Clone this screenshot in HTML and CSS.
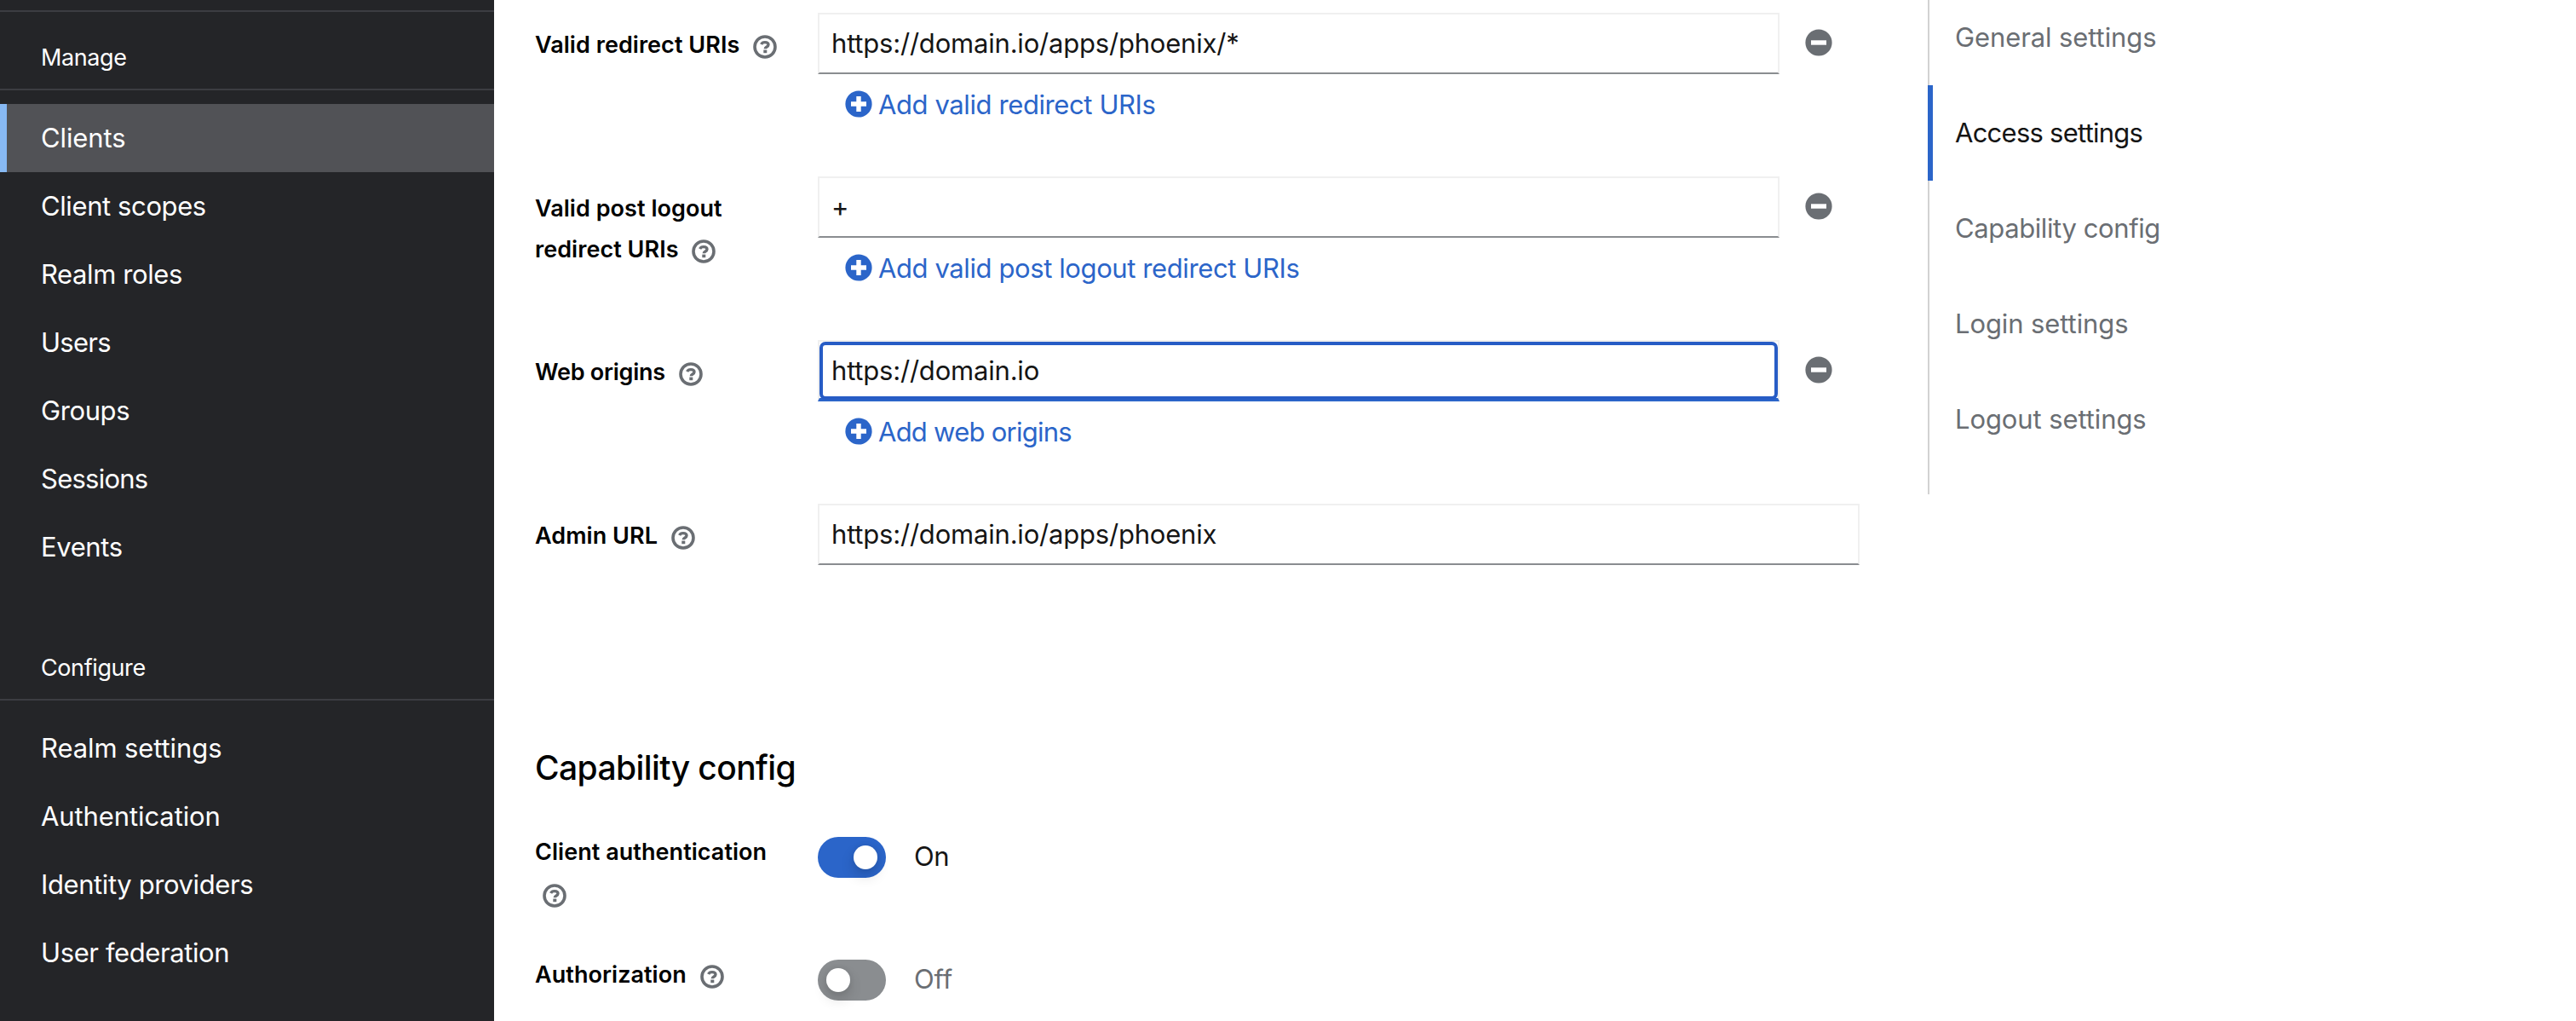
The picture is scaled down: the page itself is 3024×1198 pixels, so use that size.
FILE: index.html
```html
<!DOCTYPE html>
<html lang="en">
<head>
<meta charset="utf-8">
<title>Client details</title>
<link rel="stylesheet" href="styles.css">
</head>
<body>
<svg class="sprite" aria-hidden="true">
  <symbol id="help" viewBox="0 0 28 28">
    <circle cx="14" cy="14" r="12" fill="none" stroke="currentColor" stroke-width="3.600"/>
    <path d="M9.600 11C10.400 9.300 11.800 8.600 13.900 8.600c2.500 0 4.100 1.100 4.100 2.900 0 2.600-3.700 2.400-3.700 4.700" fill="none" stroke="currentColor" stroke-width="3.400"/>
    <rect x="12.300" y="17.600" width="4" height="3.600" fill="currentColor"/>
  </symbol>
  <symbol id="plus" viewBox="0 0 32 32">
    <circle cx="16" cy="16" r="15.600" fill="currentColor"/>
    <path d="M16 7v18M7 16h18" stroke="#fff" stroke-width="5.400"/>
  </symbol>
  <symbol id="minus" viewBox="0 0 32 32">
    <circle cx="16" cy="16" r="15.600" fill="currentColor"/>
    <path d="M7 16h18" stroke="#fff" stroke-width="5.400"/>
  </symbol>
</svg>
<div class="page">
  <nav class="sidebar">
    <section class="nav-section">
      <h2 class="nav-title"><span>Manage</span></h2>
      <ul class="nav-list">
        <li class="nav-item current loose">Clients</li>
        <li class="nav-item">Client scopes</li>
        <li class="nav-item">Realm roles</li>
        <li class="nav-item tight">Users</li>
        <li class="nav-item">Groups</li>
        <li class="nav-item tight">Sessions</li>
        <li class="nav-item">Events</li>
      </ul>
    </section>
    <section class="nav-section configure">
      <h2 class="nav-title"><span>Configure</span></h2>
      <ul class="nav-list">
        <li class="nav-item loose">Realm settings</li>
        <li class="nav-item loose">Authentication</li>
        <li class="nav-item">Identity providers</li>
        <li class="nav-item">User federation</li>
      </ul>
    </section>
  </nav>
  <main class="form">
    <div class="group">
      <div class="label">Valid redirect URIs <svg class="help"><use href="#help"/></svg></div>
      <div class="control">
        <div class="entry"><div class="input">https://domain.io/apps/phoenix/*</div><svg class="remove"><use href="#minus"/></svg></div>
        <div class="add">
          <svg class="plus"><use href="#plus"/></svg><span>Add valid redirect URIs</span>
        </div>
      </div>
    </div>
    <div class="group">
      <div class="label">Valid post logout<br>redirect URIs <svg class="help"><use href="#help"/></svg></div>
      <div class="control">
        <div class="entry"><div class="input">+</div><svg class="remove"><use href="#minus"/></svg></div>
        <div class="add">
          <svg class="plus"><use href="#plus"/></svg><span>Add valid post logout redirect URIs</span>
        </div>
      </div>
    </div>
    <div class="group">
      <div class="label"><span class="narrow">Web origins</span> <svg class="help"><use href="#help"/></svg></div>
      <div class="control">
        <div class="entry"><div class="input focused">https://domain.io</div><svg class="remove"><use href="#minus"/></svg></div>
        <div class="add">
          <svg class="plus"><use href="#plus"/></svg><span class="tight">Add web origins</span>
        </div>
      </div>
    </div>
    <div class="group">
      <div class="label">Admin URL <svg class="help"><use href="#help"/></svg></div>
      <div class="control">
        <div class="entry"><div class="input">https://domain.io/apps/phoenix</div></div>
      </div>
    </div>
    <h1 class="heading">Capability config</h1>
    <div class="group switch-row">
      <div class="label">Client authentication<br><svg class="help wrapped"><use href="#help"/></svg></div>
      <div class="switch on"><span class="track"><span class="knob"></span></span><span class="state">On</span></div>
    </div>
    <div class="group switch-row last">
      <div class="label">Authorization <svg class="help"><use href="#help"/></svg></div>
      <div class="switch"><span class="track"><span class="knob"></span></span><span class="state loose">Off</span></div>
    </div>
  </main>
  <ul class="jump-links">
    <li class="jump loose">General settings</li>
    <li class="jump active tight">Access settings</li>
    <li class="jump">Capability config</li>
    <li class="jump loose">Login settings</li>
    <li class="jump loose">Logout settings</li>
  </ul>
</div>
</body>
</html>
```
FILE: styles.css
```css
* { box-sizing: border-box; }
body {
  margin: 0;
  height: 1198px;
  overflow: hidden;
  background: #fff;
  color: #151515;
  font-family: Inter, "Liberation Sans", sans-serif;
  font-size: 31px;
  letter-spacing: -0.4px;
}
ul { list-style: none; margin: 0; padding: 0; }
h1, h2 { margin: 0; }
.sprite { display: none; }
.tight { letter-spacing: -0.75px; }
.loose { letter-spacing: -0.1px; }
.page { display: flex; align-items: flex-start; height: 1198px; }

.sidebar {
  flex: none;
  width: 580px;
  height: 1198px;
  padding-top: 12px;
  background: #242528;
  color: #fff;
}
.nav-section { border-top: 2px solid #3c3d42; }
.nav-section.configure { border-top: 0; }
.nav-title {
  padding: 33px 48px 15px;
  border-bottom: 2px solid #3c3d42;
  font-size: 27px;
  font-weight: 400;
  line-height: 42px;
}
.configure .nav-title { padding-top: 81px; }
.nav-list { padding-top: 16px; }
.nav-item { height: 80px; padding-left: 48px; line-height: 80px; }
.nav-item.current { border-left: 8px solid #87b9f3; padding-left: 40px; background: #515256; }

.form { flex: none; width: 1603px; padding: 15px 0 0 48px; }
.group { display: grid; grid-template-columns: 332px 1fr; height: 192px; }
.label {
  padding-top: 14px;
  color: #000;
  font-size: 27px;
  font-weight: 600;
  letter-spacing: 0.05px;
  line-height: 48px;
  white-space: nowrap;
}
.narrow { letter-spacing: -0.25px; }
.help { width: 28px; height: 28px; margin-left: 9px; vertical-align: -7px; color: #6a6e73; }
.entry { display: flex; align-items: center; gap: 30px; }
.input {
  position: relative;
  flex: 1;
  height: 72px;
  padding-left: 14px;
  border: 2px solid #f0f0f0;
  border-bottom-color: #8a8d90;
  letter-spacing: -0.2px;
  line-height: 68px;
}
.input.focused { border-bottom: 4px solid #2b65c9; }
.input.focused::after {
  content: "";
  position: absolute;
  inset: 0 0 -2px;
  border: 4px solid #275cc5;
  border-radius: 7px;
}
.remove { flex: none; width: 32px; height: 32px; margin: 0 32px 2px 0; color: #6a6e73; }
.add { display: flex; gap: 7px; padding: 12px 0 0 32px; line-height: 48px; color: #2b65c9; }
.plus { width: 32px; height: 32px; margin-top: 7px; }

.heading {
  height: 56px;
  margin-top: 90px;
  color: #000;
  font-size: 39px;
  font-weight: 500;
  letter-spacing: -0.6px;
  line-height: 56px;
}
.switch-row { height: 144px; }
.heading + .switch-row { margin-top: 53px; }
.switch-row.last { height: 72px; }
.switch-row .label { padding-top: 0; line-height: 35px; }
.help.wrapped { margin-top: 20px; }
.switch { display: flex; align-items: center; gap: 33px; height: 48px; color: #6a6e73; }
.switch.on { color: #151515; }
.state { line-height: 46px; padding-bottom: 2px; }
.track { display: flex; align-items: center; width: 80px; height: 48px; padding: 0 10px; border-radius: 24px; background: #8a8d90; }
.knob { width: 28px; height: 28px; border-radius: 50%; background: #fff; box-shadow: 0 8px 16px rgba(3, 3, 3, .16), 0 0 6px rgba(3, 3, 3, .08); }
.on .track { justify-content: flex-end; background: #2b65c9; }

.jump-links { margin-left: 80px; height: 580px; border-left: 2px solid #d2d2d2; }
.jump { height: 112px; padding-left: 30px; line-height: 112px; color: #6a6e73; }
.jump:first-child { margin-top: -12px; }
.jump.active { margin-left: -2px; padding-left: 26px; border-left: 6px solid #2b65c9; color: #151515; }
```
